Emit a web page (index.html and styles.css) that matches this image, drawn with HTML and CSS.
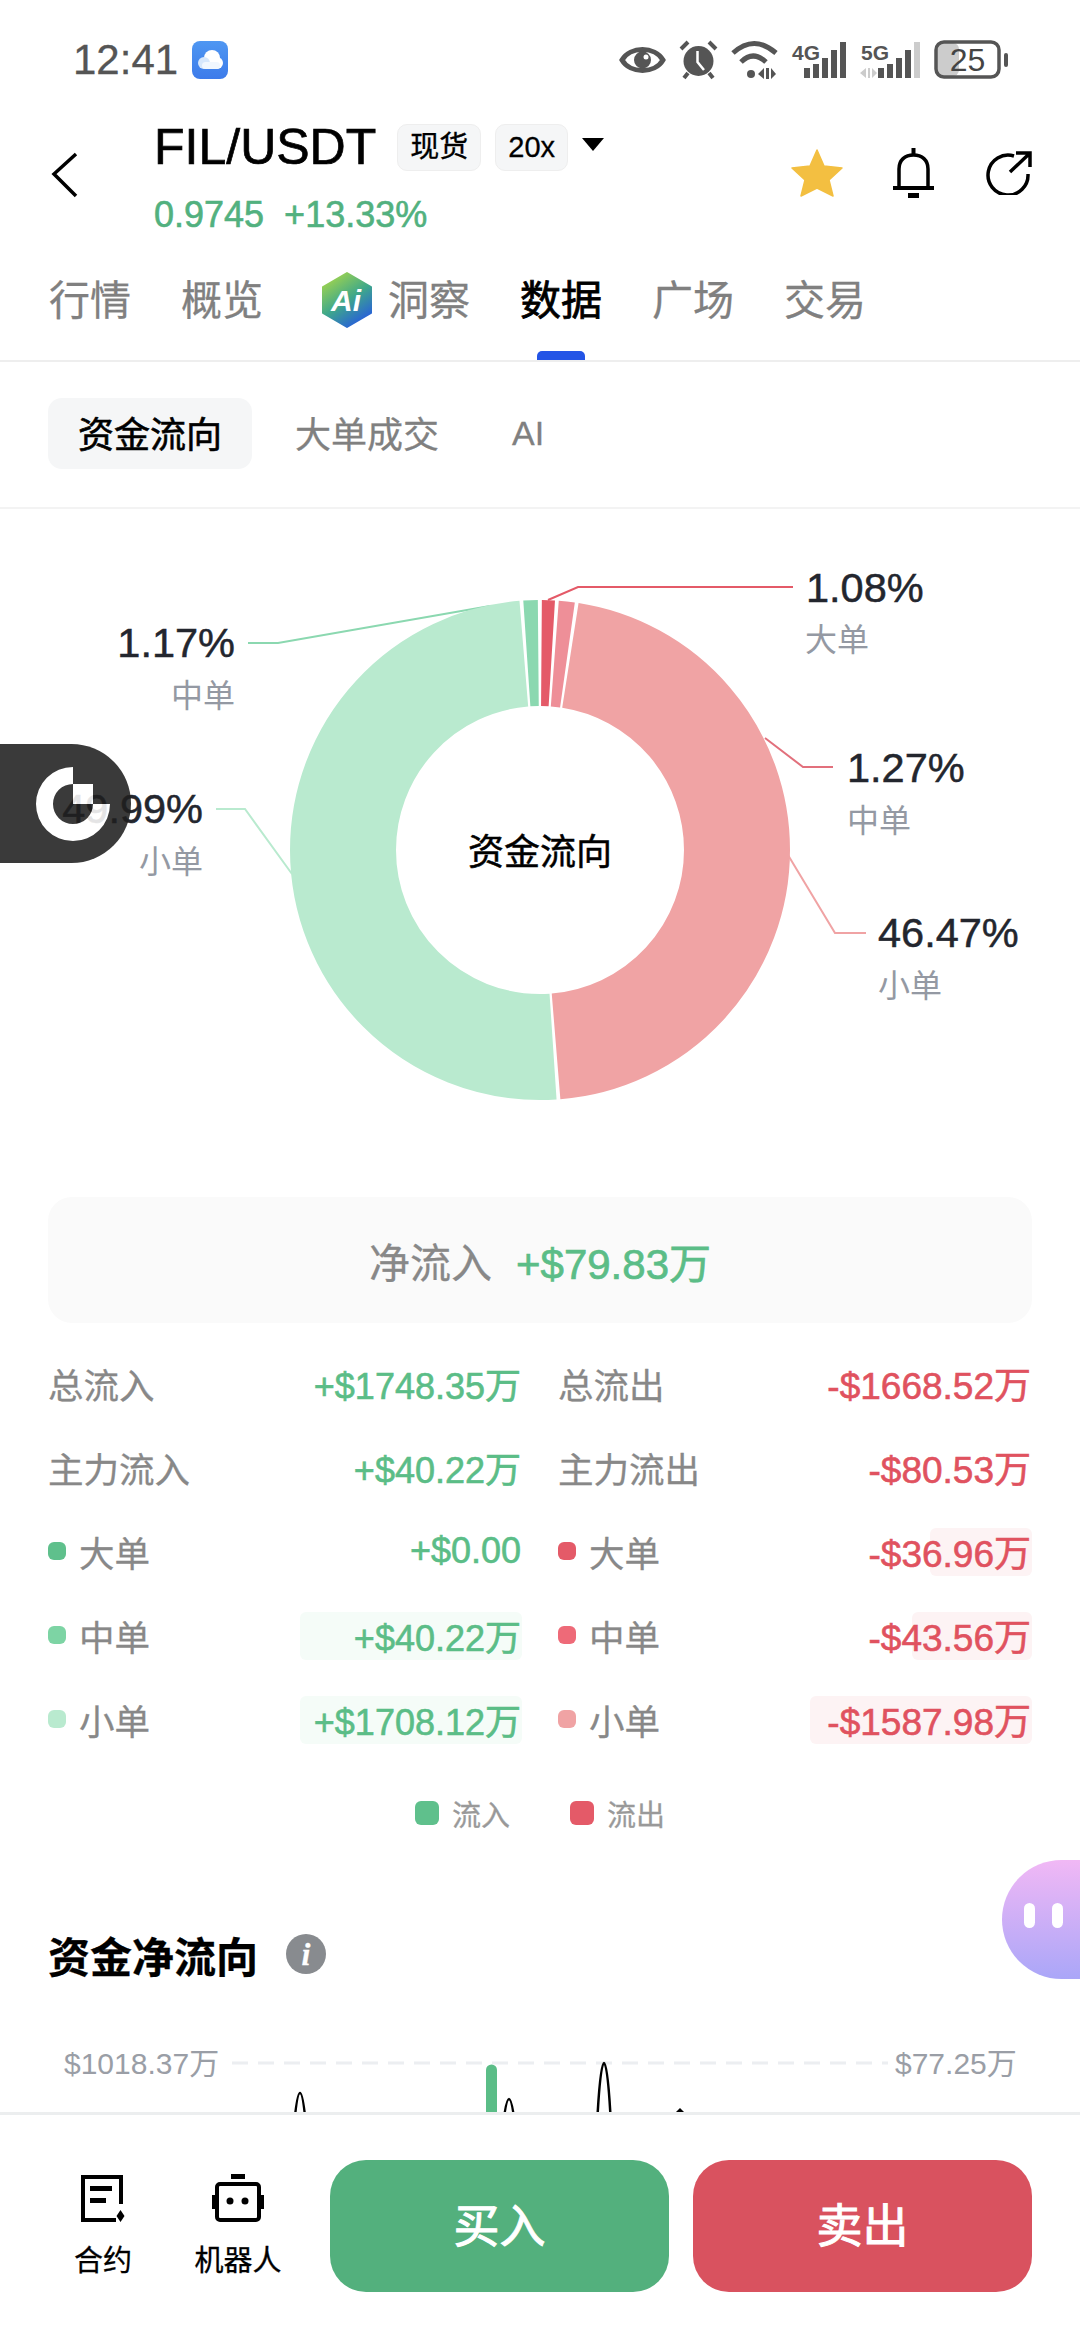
FILE: index.html
```html
<!DOCTYPE html>
<html lang="zh-CN">
<head>
    <meta charset="UTF-8">
    <meta name="viewport" content="width=device-width, initial-scale=1.0">
    <title>FIL/USDT</title>
    <link rel="stylesheet" href="styles.css">
</head>
<body>

<div class="status-bar">
    <div class="status-left">
        <span class="time">12:41</span>
        <svg class="cloud-app" width="36" height="38" viewBox="0 0 36 38">
            <defs><linearGradient id="cloudbg" x1="0" y1="0" x2="0" y2="1"><stop offset="0" stop-color="#4f97f2"/><stop offset="1" stop-color="#3d7bea"/></linearGradient></defs>
            <rect width="36" height="38" rx="8" fill="url(#cloudbg)"/>
            <circle cx="20" cy="17" r="8" fill="#fff"/>
            <circle cx="12" cy="22" r="6" fill="#d6e7fc"/>
            <circle cx="25" cy="22" r="6" fill="#fff"/>
            <rect x="10" y="21" width="18" height="7" rx="3.5" fill="#f1f7fe"/>
        </svg>
    </div>
    <div class="status-right">
        <svg width="47" height="40" viewBox="0 0 47 40">
            <path d="M3 20C11 6 36 6 44 20C36 34 11 34 3 20Z" fill="none" stroke="#555" stroke-width="5"/>
            <circle cx="23.500" cy="20" r="8.500" fill="#555"/>
            <circle cx="27" cy="17" r="2.500" fill="#fff"/>
        </svg>
        <svg width="39" height="40" viewBox="0 0 39 40">
            <circle cx="19.500" cy="21" r="15" fill="#555"/>
            <path d="M2 9L9 2M30 2L37 9M9 33L5 38M30 33L34 38" stroke="#555" stroke-width="4" fill="none"/>
            <path d="M18.500 11V22L25 30" stroke="#fff" stroke-width="2.500" fill="none"/>
        </svg>
        <svg width="47" height="40" viewBox="0 0 47 40">
            <path d="M2 13Q23 -6 45 13M10 22Q22 10 35 22" stroke="#555" stroke-width="5" fill="none"/>
            <circle cx="20" cy="34" r="4" fill="#555"/>
            <path d="M27 34L33 28V39ZM35 28H38V39H35ZM40 28L45 34L40 39Z" fill="#555"/>
        </svg>
        <svg width="56" height="40" viewBox="0 0 56 40">
            <text class="net-type" x="1" y="20">4G</text>
            <path d="M13 28H19V38H13ZM22 24H28V38H22ZM31 18H37V38H31ZM40 10H46V38H40ZM49 2H55V38H49Z" fill="#555"/>
        </svg>
        <svg width="61" height="40" viewBox="0 0 61 40">
            <text class="net-type" x="1" y="20">5G</text>
            <path d="M0 33L6 28V38ZM8 28H10V38H8ZM12 28L17 33L12 38Z" fill="#ccc"/>
            <path d="M18 28H24V38H18ZM27 24H33V38H27ZM36 18H42V38H36ZM45 10H51V38H45Z" fill="#555"/>
            <path d="M54 2H60V38H54Z" fill="#ccc"/>
        </svg>
        <svg width="74" height="40" viewBox="0 0 74 40">
            <rect x="3" y="3" width="22" height="33" rx="6" fill="#ccc"/>
            <rect x="2" y="2" width="63" height="35" rx="8" fill="none" stroke="#555" stroke-width="3.500"/>
            <text class="batt-text" x="33.500" y="31">25</text>
            <rect x="70" y="13" width="4" height="14" rx="2" fill="#555"/>
        </svg>
    </div>
</div>

<header class="top-bar">
    <svg class="back-icon" width="30" height="46" viewBox="0 0 30 46">
        <path d="M26 2L4 22L26 44" fill="none" stroke="#000" stroke-width="3.500"/>
    </svg>
    <div class="pair-info">
        <div class="pair-row">
            <span class="pair-name">FIL/USDT</span>
            <span class="tag">现货</span>
            <span class="tag">20x</span>
            <span class="caret"></span>
        </div>
        <div class="pair-price">
            <span>0.9745</span>
            <span>+13.33%</span>
        </div>
    </div>
    <div class="top-actions">
        <svg width="52" height="48" viewBox="0 0 52 48">
            <path d="M26 1L33 17L51 19L38 31L42 47L26 39L10 47L14 31L1 19L19 17Z" fill="#f3bf41" stroke="#f3bf41" stroke-width="1.500" stroke-linejoin="round"/>
        </svg>
        <svg width="41" height="50" viewBox="0 0 41 50">
            <path d="M6 39V21C6 12 12 7 20.500 7C29 7 35 12 35 21V39" fill="none" stroke="#000" stroke-width="3.500"/>
            <path d="M18.500 0H22.500V7H18.500ZM0 38H41V42H0ZM15 45H26V50H15Z" fill="#000"/>
        </svg>
        <svg class="share-icon" width="46" height="44" viewBox="0 0 46 44">
            <path d="M28 5A20 20 0 1 0 42 23" fill="none" stroke="#000" stroke-width="3.500"/>
            <path d="M24 21L43 3M30 2H44V16" fill="none" stroke="#000" stroke-width="3.500"/>
        </svg>
    </div>
</header>

<nav class="tabs">
    <span class="tab">行情</span>
    <span class="tab">概览</span>
    <span class="tab tab-ai">
        <svg width="52" height="56" viewBox="0 0 52 56">
            <defs><linearGradient id="aibg" x1="0.200" y1="0" x2="0.800" y2="1"><stop offset="0" stop-color="#a5d64a"/><stop offset="0.500" stop-color="#3fa88a"/><stop offset="1" stop-color="#2456e4"/></linearGradient></defs>
            <path d="M26 1L50 15V41L26 55L2 41V15Z" fill="url(#aibg)" stroke="url(#aibg)" stroke-width="2" stroke-linejoin="round"/>
            <text class="ai-mark" x="25" y="39">Ai</text>
        </svg>
        洞察
    </span>
    <span class="tab active">数据</span>
    <span class="tab">广场</span>
    <span class="tab">交易</span>
</nav>

<div class="sub-tabs">
    <span class="sub-tab selected">资金流向</span>
    <span class="sub-tab">大单成交</span>
    <span class="sub-tab sub-tab-ai">AI</span>
</div>

<section class="pie-section">
    <svg class="pie" width="1080" height="689" viewBox="0 509 1080 689">
        <!-- leader lines -->
        <path class="lead g3" d="M248 643H278L490 606"/>
        <path class="lead g2" d="M216 809H245L292 874"/>
        <path class="lead r1" d="M548 600L578 587H793"/>
        <path class="lead r2" d="M765 738L803 767H833"/>
        <path class="lead r3" d="M788 855L835 933H866"/>

        <!-- donut, values are percents -->
        <g transform="rotate(-90 540 850)">
            <circle class="slice r1" cx="540" cy="850" r="197" pathLength="100" stroke-dasharray="0.84 99.16" stroke-dashoffset="-0.12"/>
            <circle class="slice r2" cx="540" cy="850" r="197" pathLength="100" stroke-dasharray="1.03 98.97" stroke-dashoffset="-1.20"/>
            <circle class="slice r3" cx="540" cy="850" r="197" pathLength="100" stroke-dasharray="46.23 53.77" stroke-dashoffset="-2.47"/>
            <circle class="slice g2" cx="540" cy="850" r="197" pathLength="100" stroke-dasharray="49.75 50.25" stroke-dashoffset="-48.94"/>
            <circle class="slice g3" cx="540" cy="850" r="197" pathLength="100" stroke-dasharray="0.93 99.07" stroke-dashoffset="-98.93"/>
        </g>
        <text class="pie-center" x="540" y="865">资金流向</text>

        <text class="pct" x="806" y="602">1.08%</text>
        <text class="pct-name" x="805" y="651">大单</text>
        <text class="pct" x="847" y="782">1.27%</text>
        <text class="pct-name" x="847" y="832">中单</text>
        <text class="pct" x="878" y="947">46.47%</text>
        <text class="pct-name" x="878" y="997">小单</text>
        <text class="pct end" x="235" y="657">1.17%</text>
        <text class="pct-name end" x="235" y="707">中单</text>
        <text class="pct end" x="203" y="823">49.99%</text>
        <text class="pct-name end" x="203" y="873">小单</text>
    </svg>
</section>

<div class="net-box">
    <span class="net-label">净流入</span>
    <span class="net-value up">+$79.83万</span>
</div>

<div class="flow-table">
    <div class="flow-row"><span class="flow-name">总流入</span><span class="flow-val up">+$1748.35万</span></div>
    <div class="flow-row"><span class="flow-name">总流出</span><span class="flow-val down">-$1668.52万</span></div>
    <div class="flow-row"><span class="flow-name">主力流入</span><span class="flow-val up">+$40.22万</span></div>
    <div class="flow-row"><span class="flow-name">主力流出</span><span class="flow-val down">-$80.53万</span></div>
    <div class="flow-row">
        <span class="flow-name"><i class="dot dot-g1"></i>大单</span>
        <span class="flow-val up">+$0.00</span>
    </div>
    <div class="flow-row">
        <span class="bar bar-red" style="width: 102px"></span>
        <span class="flow-name"><i class="dot dot-r1"></i>大单</span>
        <span class="flow-val down">-$36.96万</span>
    </div>
    <div class="flow-row">
        <span class="bar bar-green" style="width: 222px"></span>
        <span class="flow-name"><i class="dot dot-g2"></i>中单</span>
        <span class="flow-val up">+$40.22万</span>
    </div>
    <div class="flow-row">
        <span class="bar bar-red" style="width: 120px"></span>
        <span class="flow-name"><i class="dot dot-r2"></i>中单</span>
        <span class="flow-val down">-$43.56万</span>
    </div>
    <div class="flow-row">
        <span class="bar bar-green" style="width: 222px"></span>
        <span class="flow-name"><i class="dot dot-g3"></i>小单</span>
        <span class="flow-val up">+$1708.12万</span>
    </div>
    <div class="flow-row">
        <span class="bar bar-red" style="width: 222px"></span>
        <span class="flow-name"><i class="dot dot-r3"></i>小单</span>
        <span class="flow-val down">-$1587.98万</span>
    </div>
</div>

<div class="legend">
    <span class="legend-item"><i class="swatch swatch-in"></i>流入</span>
    <span class="legend-item"><i class="swatch swatch-out"></i>流出</span>
</div>

<div class="section-title">
    <h2>资金净流向</h2>
    <span class="info-icon">i</span>
</div>

<div class="net-chart">
    <svg width="1080" height="82" viewBox="0 2030 1080 82">
        <text class="axis-label" x="64" y="2073">$1018.37万</text>
        <text class="axis-label" x="895" y="2073">$77.25万</text>
        <path class="axis-line" d="M232 2062H888"/>
        <path d="M486 2125V2069A5.500 5.500 0 0 1 497 2069V2125Z" fill="#5bbd87"/>
        <path class="peak" d="M294 2125C298 2081 302 2081 306 2125"/>
        <path class="peak" d="M503 2125C507 2089 511 2089 515 2125"/>
        <path class="peak" d="M597 2125C601 2041 607 2041 611 2125"/>
        <path d="M674 2113L680 2107L686 2113Z" fill="#000"/>
    </svg>
</div>

<footer class="bottom-bar">
    <div class="tool">
        <svg width="46" height="48" viewBox="0 0 46 48">
            <path d="M36 46H3V3H41V30" fill="none" stroke="#000" stroke-width="4"/>
            <path d="M10 12H32V17H10ZM10 24H26V29H10ZM40.500 36L44.500 42L40.500 48L36.500 42Z" fill="#000"/>
        </svg>
        <span>合约</span>
    </div>
    <div class="tool">
        <svg width="52" height="48" viewBox="0 0 52 48">
            <rect x="5" y="10" width="42" height="36" rx="3" fill="none" stroke="#000" stroke-width="4"/>
            <path d="M19 0H33V5H19ZM0 21H3V35H0ZM49 21H52V35H49Z" fill="#000"/>
            <circle cx="18" cy="27" r="3.500" fill="#000"/>
            <circle cx="33" cy="27" r="3.500" fill="#000"/>
        </svg>
        <span>机器人</span>
    </div>
    <div class="btn btn-buy">买入</div>
    <div class="btn btn-sell">卖出</div>
</footer>

<!-- floating stuff -->
<div class="float-left">
    <svg width="80" height="80" viewBox="0 0 80 80">
        <path d="M40 3A37 37 0 1 0 77 40H60A20 20 0 1 1 40 20Z" fill="#fff"/>
        <rect x="40" y="20" width="20" height="20" fill="#fff"/>
    </svg>
</div>
<div class="float-right">
    <i class="eye"></i>
    <i class="eye"></i>
</div>

</body>
</html>
```

FILE: styles.css
```css
* {
    box-sizing: border-box;
}

body {
    font-family: "Liberation Sans", "Noto Sans CJK SC", sans-serif;
    width: 1080px;
    height: 2340px;
    margin: 0;
    position: relative;
    overflow: hidden;
    display: flex;
    flex-direction: column;
    background-color: #fff;
    -webkit-text-stroke: 0.3px;
}

svg {
    display: block;
}

.up {
    color: #5bbd87;
}

.down {
    color: #e0525f;
}

/* status bar */
.status-bar {
    height: 120px;
    flex-shrink: 0;
    padding: 0 72px 0 73px;
    display: flex;
    justify-content: space-between;
    align-items: center;
}

.status-left {
    display: flex;
    align-items: center;
    gap: 14px;
}

.time {
    font-size: 42px;
    color: #555;
}

.status-right {
    display: flex;
    align-items: center;
    gap: 13px;
}

.net-type {
    font-size: 21px;
    font-weight: 700;
    fill: #555;
}

.batt-text {
    font-size: 32px;
    fill: #444;
    text-anchor: middle;
}

/* header */
.top-bar {
    height: 120px;
    flex-shrink: 0;
    padding: 0 48px 0 50px;
    display: flex;
    align-items: flex-start;
}

.back-icon {
    margin-top: 32px;
    margin-right: 74px;
}

.pair-row {
    height: 54px;
    display: flex;
    align-items: center;
}

.pair-name {
    font-size: 50px;
    margin-right: 21px;
    color: #000;
    -webkit-text-stroke: 0.7px;
}

.tag {
    height: 47px;
    padding: 0 12px;
    margin-right: 14px;
    font-size: 29px;
    line-height: 45px;
    background-color: #f5f6f7;
    border: 1px solid #eee;
    border-radius: 10px;
}

.caret {
    width: 0;
    height: 0;
    margin: -5px 0 0 0;
    border-left: 11px solid transparent;
    border-right: 11px solid transparent;
    border-top: 13px solid #000;
}

.pair-price {
    margin-top: 20px;
    display: flex;
    gap: 20px;
    font-size: 36px;
    line-height: 42px;
    color: #52b17f;
    -webkit-text-stroke: 0.6px;
}

.top-actions {
    margin-left: auto;
    margin-top: 28px;
    display: flex;
    align-items: center;
    gap: 50px;
}

.share-icon {
    margin-left: 2px;
}

/* tabs */
.tabs {
    height: 122px;
    flex-shrink: 0;
    padding-left: 49px;
    display: flex;
    align-items: center;
    gap: 50px;
    font-size: 41px;
    color: #808080;
    border-bottom: 2px solid #eee;
}

.tab {
    position: relative;
    height: 120px;
    padding-bottom: 6px;
    display: flex;
    align-items: center;
}

.tab-ai {
    margin-left: 8px;
    gap: 15px;
}

.tab-ai svg {
    margin-top: 6px;
}

.tab.active {
    color: #000;
    -webkit-text-stroke: 0.8px;
}

.tab.active::after {
    content: "";
    position: absolute;
    left: 17px;
    bottom: 0;
    width: 48px;
    height: 9px;
    background-color: #2354e6;
    border-radius: 5px 5px 0 0;
}

.ai-mark {
    font-size: 30px;
    font-weight: 700;
    font-style: italic;
    fill: #fff;
    text-anchor: middle;
}

.sub-tabs {
    height: 147px;
    flex-shrink: 0;
    padding: 36px 0 0 48px;
    display: flex;
    align-items: flex-start;
    gap: 13px;
    border-bottom: 2px solid #f3f3f3;
}

.sub-tab {
    height: 71px;
    padding: 2px 30px 0;
    font-size: 36px;
    line-height: 71px;
    color: #808080;
}

.sub-tab-ai {
    font-size: 34px;
    padding-top: 0;
}

.sub-tab.selected {
    color: #000;
    background-color: #f5f6f7;
    border-radius: 14px;
    -webkit-text-stroke: 0.6px;
}

/* donut */
.pie-section {
    height: 688px;
    flex-shrink: 0;
}

.slice {
    fill: none;
    stroke-width: 106;
}

.lead {
    fill: none;
    stroke-width: 2;
}

.slice.r1 { stroke: #e45a68; }
.slice.r2 { stroke: #ee8f98; }
.slice.r3 { stroke: #f0a3a4; }
.slice.g2 { stroke: #b9eacf; }
.slice.g3 { stroke: #8bd8b0; }
.lead.r1 { stroke: #e45a68; }
.lead.r2 { stroke: #e2707c; }
.lead.r3 { stroke: #f0a3a4; }
.lead.g2 { stroke: #b9eacf; }
.lead.g3 { stroke: #8bd8b0; }

.pie-center {
    font-size: 36px;
    fill: #000;
    text-anchor: middle;
    stroke: #000;
    stroke-width: 0.5;
}

.pct {
    font-size: 41.500px;
    fill: #23262e;
    stroke: #23262e;
    stroke-width: 0.5;
}

.pct-name {
    font-size: 32px;
    fill: #9499a3;
}

.end {
    text-anchor: end;
}

/* net inflow box */
.net-box {
    height: 126px;
    flex-shrink: 0;
    margin: 0 48px;
    display: flex;
    justify-content: center;
    align-items: center;
    gap: 24px;
    background-color: #fafafa;
    border-radius: 24px;
}

.net-label {
    font-size: 41px;
    color: #888;
}

.net-value {
    font-size: 42px;
    -webkit-text-stroke: 0.7px;
}

/* flow table */
.flow-table {
    margin: 18px 48px 0;
    flex-shrink: 0;
    display: grid;
    grid-template-columns: 474px 474px;
    column-gap: 36px;
    grid-auto-rows: 84px;
}

.flow-row {
    position: relative;
    display: flex;
    justify-content: space-between;
    align-items: center;
}

.flow-name {
    position: relative;
    display: flex;
    align-items: center;
    font-size: 35.500px;
    color: #888;
}

.flow-val {
    position: relative;
    font-size: 36px;
    padding-right: 1px;
    -webkit-text-stroke: 0.6px;
}

.flow-val.down {
    font-size: 37px;
}

.dot {
    width: 18px;
    height: 18px;
    margin-right: 13px;
    border-radius: 6px;
}

.dot-g1 { background-color: #5fc08c; }
.dot-g2 { background-color: #7dd4a4; }
.dot-g3 { background-color: #b9eacf; }
.dot-r1 { background-color: #e45a68; }
.dot-r2 { background-color: #ee6a78; }
.dot-r3 { background-color: #f0a3a4; }

.bar {
    position: absolute;
    right: 0;
    top: 19px;
    height: 48px;
    border-radius: 6px;
}

.bar-green {
    background-color: #f5fcf8;
}

.bar-red {
    background-color: #fdf3f4;
}

.legend {
    height: 34px;
    margin-top: 35px;
    flex-shrink: 0;
    display: flex;
    justify-content: center;
    gap: 60px;
}

.legend-item {
    display: flex;
    align-items: center;
    gap: 13px;
    font-size: 29px;
    color: #999;
}

.swatch {
    width: 24px;
    height: 24px;
    border-radius: 6px;
}

.swatch-in {
    background-color: #5fc08c;
}

.swatch-out {
    background-color: #e45a68;
}

.section-title {
    height: 42px;
    margin: 103px 0 0 48px;
    flex-shrink: 0;
    display: flex;
    align-items: center;
    gap: 28px;
}

.section-title h2 {
    margin: 0;
    font-size: 42px;
    font-weight: 700;
    color: #000;
}

.info-icon {
    width: 40px;
    height: 40px;
    border-radius: 50%;
    background-color: #888b8f;
    color: #fff;
    font-family: "Liberation Serif", serif;
    font-style: italic;
    font-weight: 700;
    font-size: 32px;
    line-height: 40px;
    text-align: center;
}

.net-chart {
    flex: 1;
    margin-top: 56px;
    overflow: hidden;
}

.axis-label {
    font-size: 30px;
    fill: #9a9ea6;
}

.axis-line {
    stroke: #eceef1;
    stroke-width: 3;
    stroke-dasharray: 16 10;
    fill: none;
}

.peak {
    fill: none;
    stroke: #000;
    stroke-width: 2.500;
}

/* bottom bar */
.bottom-bar {
    height: 228px;
    flex-shrink: 0;
    padding: 45px 48px 0;
    display: flex;
    align-items: flex-start;
    border-top: 3px solid #eceeef;
}

.tool {
    width: 110px;
    margin-right: 25px;
    padding-top: 14px;
    display: flex;
    flex-direction: column;
    align-items: center;
    gap: 15px;
    font-size: 29px;
    color: #000;
}

.btn {
    width: 339px;
    height: 132px;
    font-size: 46px;
    line-height: 132px;
    text-align: center;
    color: #fff;
    border-radius: 36px;
    -webkit-text-stroke: 1px;
}

.btn-buy {
    margin-left: 12px;
    margin-right: 24px;
    background-color: #53b07d;
}

.btn-sell {
    background-color: #d9525f;
}

/* floating buttons */
.float-left {
    position: absolute;
    left: 0;
    top: 744px;
    width: 131px;
    height: 119px;
    padding-left: 33px;
    display: flex;
    align-items: center;
    background-color: #1f1f1f;
    border-radius: 0 60px 60px 0;
    opacity: 0.88;
}

.float-right {
    position: absolute;
    right: 0;
    top: 1860px;
    width: 78px;
    height: 119px;
    padding-left: 22px;
    display: flex;
    align-items: center;
    gap: 17px;
    background: linear-gradient(#f1b8f5, #aaa6f8);
    border-radius: 60px 0 0 60px;
}

.eye {
    width: 11px;
    height: 25px;
    margin-top: -8px;
    background-color: #fff;
    border-radius: 6px;
}
```
